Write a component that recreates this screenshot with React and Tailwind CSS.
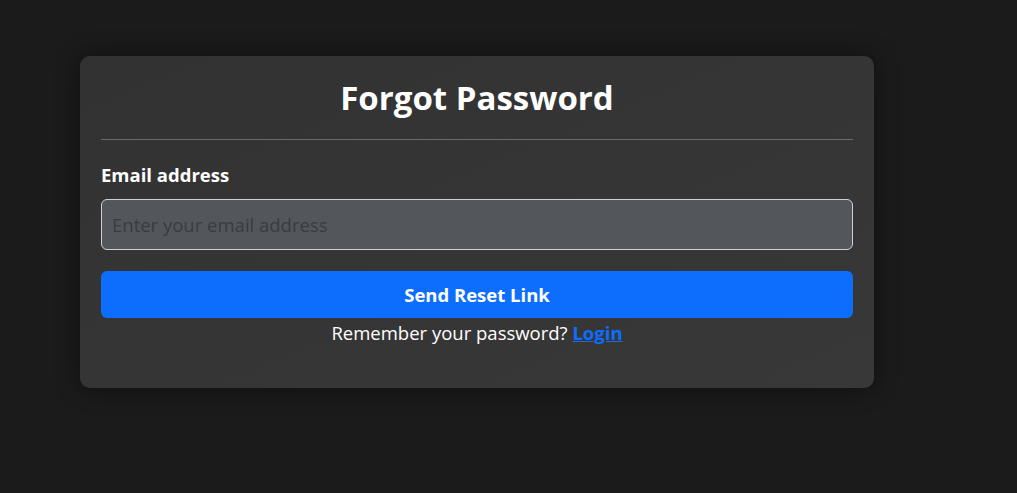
export default function App() {
  return (
    <div className="min-h-[493px] bg-[#1b1b1b] pt-[56px] pl-[80px]" style={{ fontFamily: '"Open Sans", "Noto Sans", sans-serif' }}>
      <div className="w-[794px] rounded-[10px] bg-gradient-to-br from-[#323232] to-[#383838] px-[21px] pt-[22px] pb-[41px] shadow-[0_0_24px_rgba(0,0,0,0.45)]">
        <h2 className="text-center text-[33px] font-bold leading-[40px] text-white">Forgot Password</h2>
        <hr className="mt-[21px] mb-[23px] border-t border-[#6a6a6a]" />
        <label className="block text-[18.5px] font-bold leading-[24px] text-white">Email address</label>
        <input
          type="email"
          placeholder="Enter your email address"
          className="mt-[12px] block h-[51px] w-full rounded-[6px] border border-[#d0d0d0] bg-[#53575b] px-[10px] text-[18.5px] text-white placeholder:text-[#393c40] outline-none"
        />
        <button className="mt-[21px] block h-[47px] w-full rounded-[6px] bg-[#0d6efd] text-[18.5px] font-bold text-white">
          Send Reset Link
        </button>
        <p className="mt-[1px] text-center text-[18.5px] leading-[28px] text-white">
          Remember your password?{' '}
          <a href="#" className="font-bold text-[#0d6efd] underline">Login</a>
        </p>
      </div>
    </div>
  );
}
